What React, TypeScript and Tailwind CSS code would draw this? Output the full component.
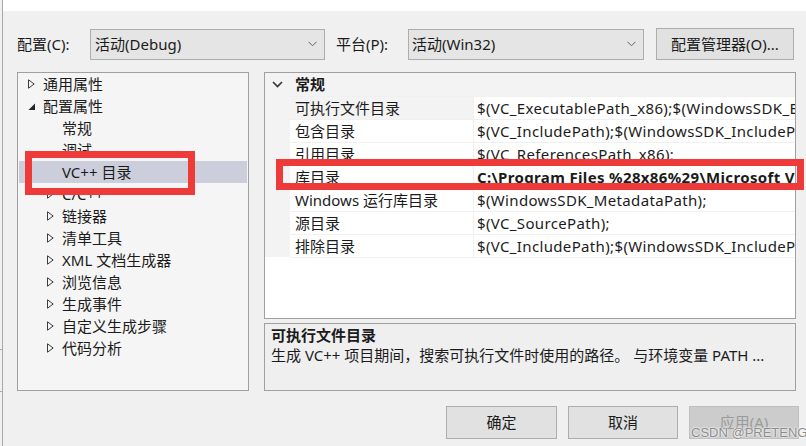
import React from 'react';

const Collapsed = () => (
  <svg width="7" height="10" viewBox="0 0 7 10" className="shrink-0">
    <path d="M0.5 0.8 L6.2 5 L0.5 9.2 Z" fill="none" stroke="#3c3c3c" strokeWidth="1" />
  </svg>
);

const Expanded = () => (
  <svg width="7" height="10" viewBox="0 0 7 10" className="shrink-0">
    <path d="M7 2.5 L7 9 L0.5 9 Z" fill="#262626" />
  </svg>
);

const Chevron = () => (
  <svg width="11" height="7" viewBox="0 0 11 7">
    <path d="M1 1 L5.5 5.5 L10 1" fill="none" stroke="#333" strokeWidth="1.6" />
  </svg>
);

const SmallChevron = () => (
  <svg width="9" height="6" viewBox="0 0 9 6">
    <path d="M0.5 0.8 L4.5 4.8 L8.5 0.8" fill="none" stroke="#606060" strokeWidth="1" />
  </svg>
);

type TreeItem = { label: string; kind: 'top-c' | 'top-e' | 'child-c' | 'leaf'; selected?: boolean };

const tree: TreeItem[] = [
  { label: '通用属性', kind: 'top-c' },
  { label: '配置属性', kind: 'top-e' },
  { label: '常规', kind: 'leaf' },
  { label: '调试', kind: 'leaf' },
  { label: 'VC++ 目录', kind: 'leaf', selected: true },
  { label: 'C/C++', kind: 'child-c' },
  { label: '链接器', kind: 'child-c' },
  { label: '清单工具', kind: 'child-c' },
  { label: 'XML 文档生成器', kind: 'child-c' },
  { label: '浏览信息', kind: 'child-c' },
  { label: '生成事件', kind: 'child-c' },
  { label: '自定义生成步骤', kind: 'child-c' },
  { label: '代码分析', kind: 'child-c' },
];

const rows: { label: string; value: string; bold?: boolean; selected?: boolean }[] = [
  { label: '可执行文件目录', value: '$(VC_ExecutablePath_x86);$(WindowsSDK_ExecutablePath);$(VS_ExecutablePath);$(MSBuild_ExecutablePath)', selected: true },
  { label: '包含目录', value: '$(VC_IncludePath);$(WindowsSDK_IncludePath);' },
  { label: '引用目录', value: '$(VC_ReferencesPath_x86);' },
  { label: '库目录', value: 'C:\\Program Files %28x86%29\\Microsoft Visual Studio\\lib', bold: true },
  { label: 'Windows 运行库目录', value: '$(WindowsSDK_MetadataPath);' },
  { label: '源目录', value: '$(VC_SourcePath);' },
  { label: '排除目录', value: '$(VC_IncludePath);$(WindowsSDK_IncludePath);' },
];

export default function App() {
  return (
    <div className="relative w-[806px] h-[446px] overflow-hidden bg-[#f0f0f0] text-[15px] text-[#1b1b1b] font-['Noto_Sans','Noto_Sans_CJK_SC',sans-serif]">
      <div className="flex h-full">
        <div className="w-[2px] shrink-0" />
        <div className="w-px shrink-0 bg-[#a9a9a9]" />
        <div className="flex flex-col flex-1">
          {/* white strip */}
          <div className="h-[11px] bg-white" />

          {/* top row */}
          <div className="flex items-center h-[32px] mt-[17px]">
            <span className="ml-[14px] w-[73px] leading-none">配置(C):</span>
            <div className="flex items-center justify-between w-[235px] h-[31px] border border-[#adadad] bg-[#e5e5e5] pl-[4px] pr-[7px]">
              <span>活动(Debug)</span>
              <SmallChevron />
            </div>
            <span className="ml-[11px] w-[72px]">平台(P):</span>
            <div className="flex items-center justify-between w-[236px] h-[31px] border border-[#adadad] bg-[#e5e5e5] pl-[3px] pr-[7px]">
              <span>活动(Win32)</span>
              <SmallChevron />
            </div>
            <div className="ml-[12px] flex items-center justify-center w-[138px] h-[32px] border border-[#adadad] bg-[#e1e1e1]">
              配置管理器(O)...
            </div>
          </div>

          {/* main area */}
          <div className="flex mt-[12px] h-[319px]">
            {/* tree */}
            <div className="ml-[14px] w-[232px] h-full border border-[#a0a0a0] bg-[#f5f5f5] pt-0 px-px">
              {tree.map((t, i) => (
                <div
                  key={i}
                  className={
                    'flex items-center h-[22px] whitespace-nowrap ' +
                    (t.selected ? 'bg-[#cccedb] ' : '') +
                    (t.kind === 'top-c' || t.kind === 'top-e' ? 'pl-[9px]' : t.kind === 'child-c' ? 'pl-[28px]' : 'pl-[43px]')
                  }
                >
                  {t.kind === 'top-c' || t.kind === 'child-c' ? <Collapsed /> : null}
                  {t.kind === 'top-e' ? <Expanded /> : null}
                  <span className={t.kind === 'leaf' ? '' : 'ml-[8px]'}>{t.label}</span>
                </div>
              ))}
            </div>

            {/* right */}
            <div className="ml-[15px] w-[532px] flex flex-col">
              <div className="h-[247px] border border-[#a0a0a0] bg-white overflow-hidden">
                <div className="flex items-center h-[23px] bg-[#f3f3f3]">
                  <div className="w-[25px] pl-[7px] flex items-center"><Chevron /></div>
                  <span className="pl-[5px] font-bold">常规</span>
                </div>
                {rows.map((r, i) => (
                  <div key={i} className="flex h-[23px]">
                    <div className="w-[25px] shrink-0 bg-[#f3f3f3]" />
                    <div className="flex flex-1 border-t border-[#f0f0f0] min-w-0">
                      <div className={'w-[184px] shrink-0 pl-[5px] flex items-center whitespace-nowrap border-r border-[#f0f0f0] ' + (r.selected ? 'bg-[#f3f3f3]' : '')}>
                        {r.label}
                      </div>
                      <div className={'flex-1 min-w-0 pl-[3px] flex items-center whitespace-nowrap overflow-hidden tracking-[0.35px] ' + (r.bold ? 'font-bold' : '')}>
                        {r.value}
                      </div>
                    </div>
                  </div>
                ))}
                <div className="flex h-0">
                  <div className="w-[25px]" />
                  <div className="flex-1 border-t border-[#f0f0f0]" />
                </div>
              </div>
              <div className="mt-[4px] h-[68px] border border-[#a0a0a0] bg-[#efefef] px-[6px] pt-[1px]">
                <div className="font-bold leading-[20px]">可执行文件目录</div>
                <div className="leading-[20px] whitespace-nowrap">生成 VC++ 项目期间，搜索可执行文件时使用的路径。 与环境变量 PATH ...</div>
              </div>
            </div>
          </div>

          {/* buttons */}
          <div className="flex mt-[15px] ml-[443px] gap-[11px]">
            <div className="w-[111px] h-[33px] flex items-center justify-center border border-[#adadad] bg-[#e1e1e1]">确定</div>
            <div className="w-[110px] h-[33px] flex items-center justify-center border border-[#adadad] bg-[#e1e1e1]">取消</div>
            <div className="relative w-[110px] h-[33px] flex items-center justify-center border border-[#bfbfbf] bg-[#cccccc] text-[#9b9b9b]">
              应用(A)
              <span className="absolute left-[1px] top-[19px] whitespace-nowrap text-[13px] leading-none text-[#8c8c8c] font-['Liberation_Sans',sans-serif] [text-shadow:0_0_2px_#fff,0_0_2px_#fff]">CSDN @PRETENG</span>
            </div>
          </div>
        </div>
      </div>

      {/* left edge ticks */}
      <div className="absolute left-0 top-[349px] w-[3px] h-px bg-[#a9a9a9]" />
      <div className="absolute left-0 top-[391px] w-[3px] h-px bg-[#a9a9a9]" />

      {/* red annotation boxes */}
      <div className="absolute left-[25px] top-[151px] w-[170px] h-[44px] border-[7px] border-[#ef3a3a]" />
      <div className="absolute left-[276px] top-[159px] w-[528px] h-[31px] border-[7px] border-[#ef3a3a]" />
    </div>
  );
}
